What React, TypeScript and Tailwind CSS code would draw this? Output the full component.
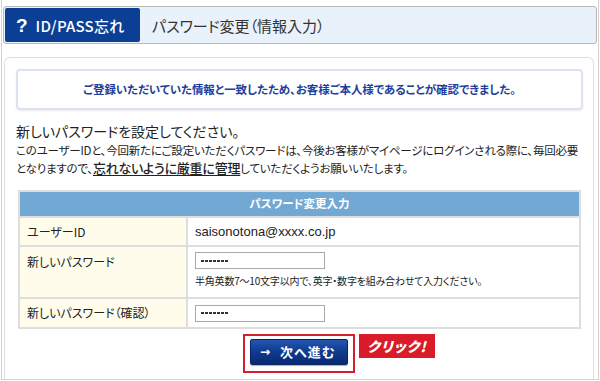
const jp = "font-['Noto_Sans_CJK_JP',sans-serif] [font-feature-settings:'palt']";

function Dots() {
  return (
    <div className="flex h-[17px] w-[130px] items-center gap-px border border-[#a9a9a9] bg-white pl-[5px]">
      {[0, 1, 2, 3, 4, 5, 6].map((i) => (
        <span key={i} className="h-[2px] w-[3px] bg-[#333]" />
      ))}
    </div>
  );
}

export default function App() {
  return (
    <div className={`h-[381px] w-[600px] overflow-hidden bg-white px-px pb-px ${jp}`}>
      <div className="flex h-full w-full flex-col border-x border-b border-[#d3d3d3]">
        {/* title bar */}
        <div className="mx-px mt-[6px] flex h-[38px] items-stretch rounded-[3px] border border-[#b9b9b9] bg-[#e9f1fb] p-px">
          <div className="flex w-[135px] items-center gap-[8px] rounded-[2px] bg-[#0b3f96] pl-[11px] text-white">
            <span className="font-['Liberation_Sans',sans-serif] text-[19px] font-bold leading-none">?</span>
            <span className="text-[15px] font-medium leading-none tracking-[0.2px]">ID/PASS忘れ</span>
          </div>
          <div className="flex items-center pl-[12px] text-[15px] leading-none text-[#333]">
            パスワード変更（情報入力）
          </div>
        </div>

        {/* content panel */}
        <div className="ml-[2px] mr-[4px] mt-[13px] flex flex-1 flex-col rounded-t-[6px] border-x border-t border-[#dedede]">
          <div className="ml-[11px] mr-[10px] mt-[11px] flex h-[41px] items-center justify-center rounded-[4px] border-2 border-[#dbe3f1] shadow-[0_1px_2px_rgba(0,0,0,0.08)]">
            <p className="text-[11.5px] font-semibold tracking-[-0.1px] text-[#1d3f9b]">
              ご登録いただいていた情報と一致したため、お客様ご本人様であることが確認できました。
            </p>
          </div>

          <div className="ml-[11px] mt-[12px] text-[#222]">
            <h2 className="text-[14px] font-normal leading-[18px]">新しいパスワードを設定してください。</h2>
            <p className="mt-[1px] whitespace-nowrap text-[11.5px] leading-[18px] tracking-[-0.22px]">
              このユーザーIDと、今回新たにご設定いただくパスワードは、今後お客様がマイページにログインされる際に、毎回必要
              <br />
              となりますので、
              <span className="text-[13px] font-medium underline underline-offset-2">忘れないように厳重に管理</span>
              していただくようお願いいたします。
            </p>
          </div>

          {/* form table */}
          <div className="ml-[13px] mt-[13px] w-[563px] border-2 border-[#dedede] text-[#222]">
            <div className="flex h-[24px] items-center justify-center bg-[#72a9d4] text-[11.5px] font-semibold text-white">
              パスワード変更入力
            </div>
            <div className="grid grid-cols-[168px_1fr] border-t-2 border-[#dedede]">
              <div className="flex h-[27px] items-center border-r-2 border-[#dedede] bg-[#fffcec] pl-[7px] text-[12px]">
                ユーザーID
              </div>
              <div className="flex h-[27px] items-center pl-[7px] font-['Liberation_Sans',sans-serif] text-[13px]">
                saisonotona@xxxx.co.jp
              </div>
            </div>
            <div className="grid grid-cols-[168px_1fr] border-t-2 border-[#dedede]">
              <div className="h-[50px] border-r-2 border-[#dedede] bg-[#fffcec] pl-[7px] pt-[6px] text-[12px]">
                新しいパスワード
              </div>
              <div className="flex h-[50px] flex-col pl-[7px] pt-[5px]">
                <Dots />
                <p className="mt-[5px] text-[10px] leading-[14px] tracking-[-0.2px]">
                  半角英数7～10文字以内で、英字・数字を組み合わせて入力ください。
                </p>
              </div>
            </div>
            <div className="grid grid-cols-[168px_1fr] border-t-2 border-[#dedede]">
              <div className="flex h-[28px] items-center border-r-2 border-[#dedede] bg-[#fffcec] pl-[7px] text-[12px]">
                新しいパスワード（確認）
              </div>
              <div className="flex h-[28px] items-center pl-[7px]">
                <Dots />
              </div>
            </div>
          </div>

          {/* action */}
          <div className="relative mt-[5px] flex justify-center">
            <div className="border-2 border-[#d41f2d] px-[5px] pb-[6px] pt-[3px]">
              <button className="flex h-[26px] w-[98px] items-center rounded-[2px] border border-[#0a2565] bg-gradient-to-b from-[#2456b0] via-[#0f3a8e] to-[#0a2a72] pl-[9px] text-white shadow-[0_1px_1px_rgba(0,0,0,0.3)]">
                <span className="font-['DejaVu_Sans',sans-serif] text-[12px] font-bold leading-none">→</span>
                <span className="ml-[10px] text-[13px] font-bold tracking-[1px]">次へ進む</span>
              </button>
            </div>
            <div className="absolute left-[354px] top-0 flex h-[24px] w-[76px] items-center justify-center bg-[#d91b2a] text-[14px] font-black italic tracking-[1px] text-white">
              クリック!
            </div>
          </div>
        </div>
      </div>
    </div>
  );
}
